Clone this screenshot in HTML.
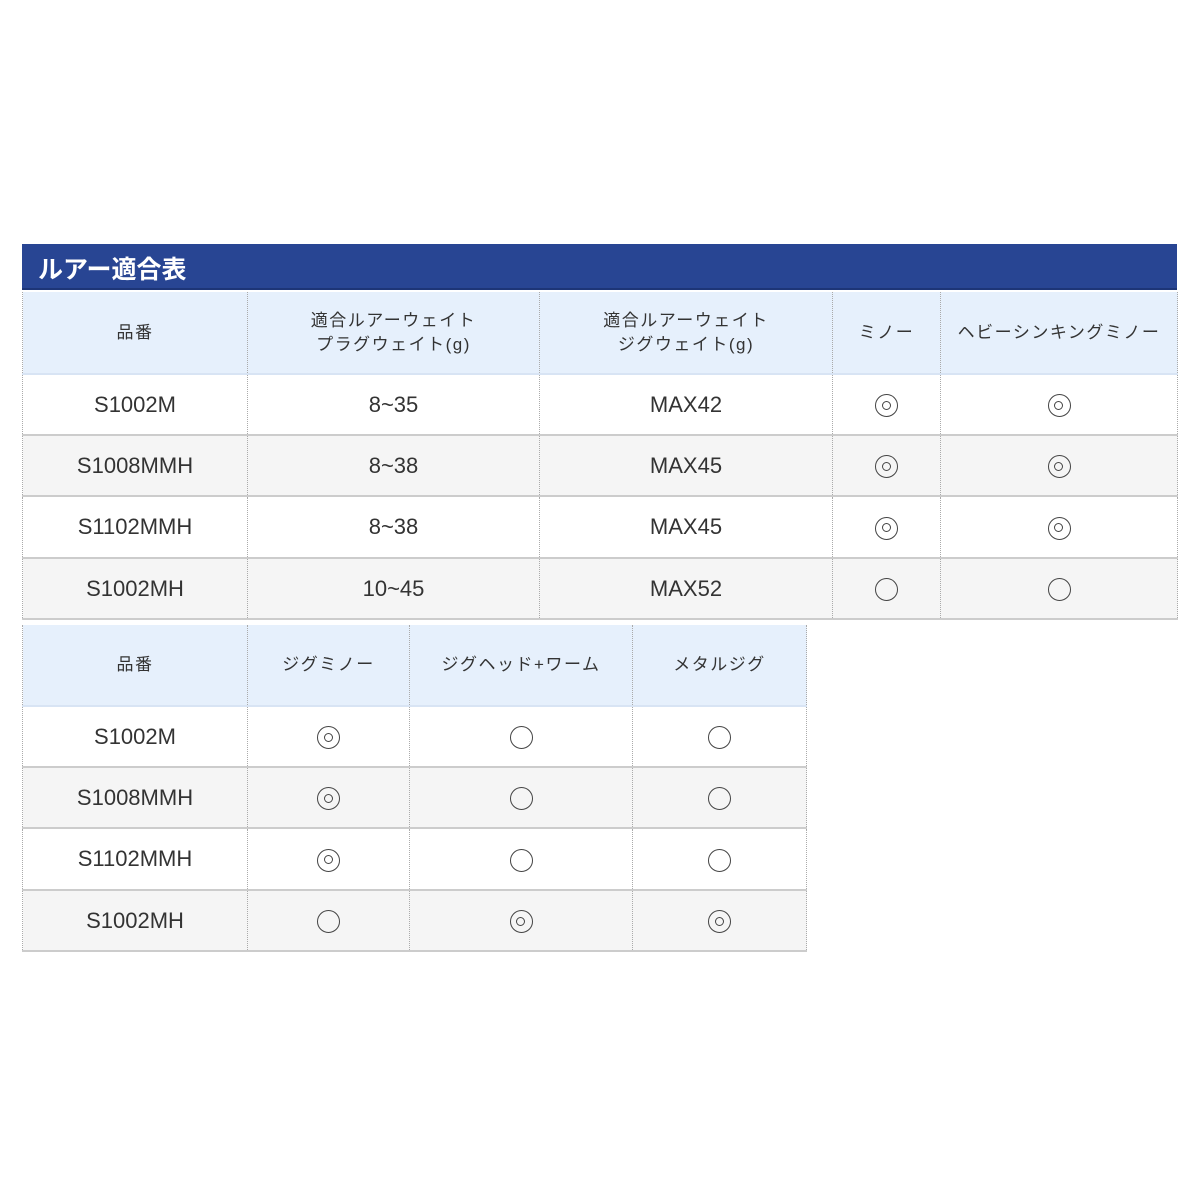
<!DOCTYPE html>
<html><head><meta charset="utf-8"><style>
body{margin:0;width:1200px;height:1200px;background:#fff;position:relative;font-family:"Liberation Sans","Noto Sans CJK JP",sans-serif;}
.bar{position:absolute;left:22px;top:244px;width:1155px;height:46px;background:#284593;color:#fff;font-size:25px;font-weight:bold;line-height:52px;box-sizing:border-box;padding-left:16px;border-bottom:2px solid #1d3577;}
table{position:absolute;left:22px;border-collapse:collapse;table-layout:fixed;}
td{border-left:1px dotted #aaa;border-right:1px dotted #aaa;border-bottom:2px solid #ccc;text-align:center;color:#333;font-size:22px;padding:0;}
tr.h td{background:#e6f0fc;font-size:17px;line-height:24px;letter-spacing:1.5px;color:#333;border-bottom:2px solid #d8e4f4;}
tr.g td{background:#f5f5f5;}
.o{display:inline-block;width:21px;height:21px;border:1.5px solid #444;border-radius:50%;position:relative;vertical-align:middle;}
.d::after{content:"";position:absolute;left:5.5px;top:5.5px;width:7px;height:7px;border:1.5px solid #444;border-radius:50%;}
</style></head><body>
<div class="bar">ルアー適合表</div>
<table style="top:292px;width:1155px">
<colgroup><col style="width:225px"><col style="width:292px"><col style="width:293px"><col style="width:108px"><col style="width:237px"></colgroup>
<tr class="h" style="height:82px"><td>品番</td><td>適合ルアーウェイト<br>プラグウェイト(g)</td><td>適合ルアーウェイト<br>ジグウェイト(g)</td><td>ミノー</td><td>ヘビーシンキングミノー</td></tr>
<tr style="height:61px"><td>S1002M</td><td>8~35</td><td>MAX42</td><td><span class="o d"></span></td><td><span class="o d"></span></td></tr>
<tr class="g" style="height:61px"><td>S1008MMH</td><td>8~38</td><td>MAX45</td><td><span class="o d"></span></td><td><span class="o d"></span></td></tr>
<tr style="height:62px"><td>S1102MMH</td><td>8~38</td><td>MAX45</td><td><span class="o d"></span></td><td><span class="o d"></span></td></tr>
<tr class="g" style="height:61px"><td>S1002MH</td><td>10~45</td><td>MAX52</td><td><span class="o"></span></td><td><span class="o"></span></td></tr>
</table>
<table style="top:625px;width:784px">
<colgroup><col style="width:225px"><col style="width:162px"><col style="width:223px"><col style="width:174px"></colgroup>
<tr class="h" style="height:81px"><td>品番</td><td>ジグミノー</td><td>ジグヘッド+ワーム</td><td>メタルジグ</td></tr>
<tr style="height:61px"><td>S1002M</td><td><span class="o d"></span></td><td><span class="o"></span></td><td><span class="o"></span></td></tr>
<tr class="g" style="height:61px"><td>S1008MMH</td><td><span class="o d"></span></td><td><span class="o"></span></td><td><span class="o"></span></td></tr>
<tr style="height:62px"><td>S1102MMH</td><td><span class="o d"></span></td><td><span class="o"></span></td><td><span class="o"></span></td></tr>
<tr class="g" style="height:61px"><td>S1002MH</td><td><span class="o"></span></td><td><span class="o d"></span></td><td><span class="o d"></span></td></tr>
</table>
</body></html>
